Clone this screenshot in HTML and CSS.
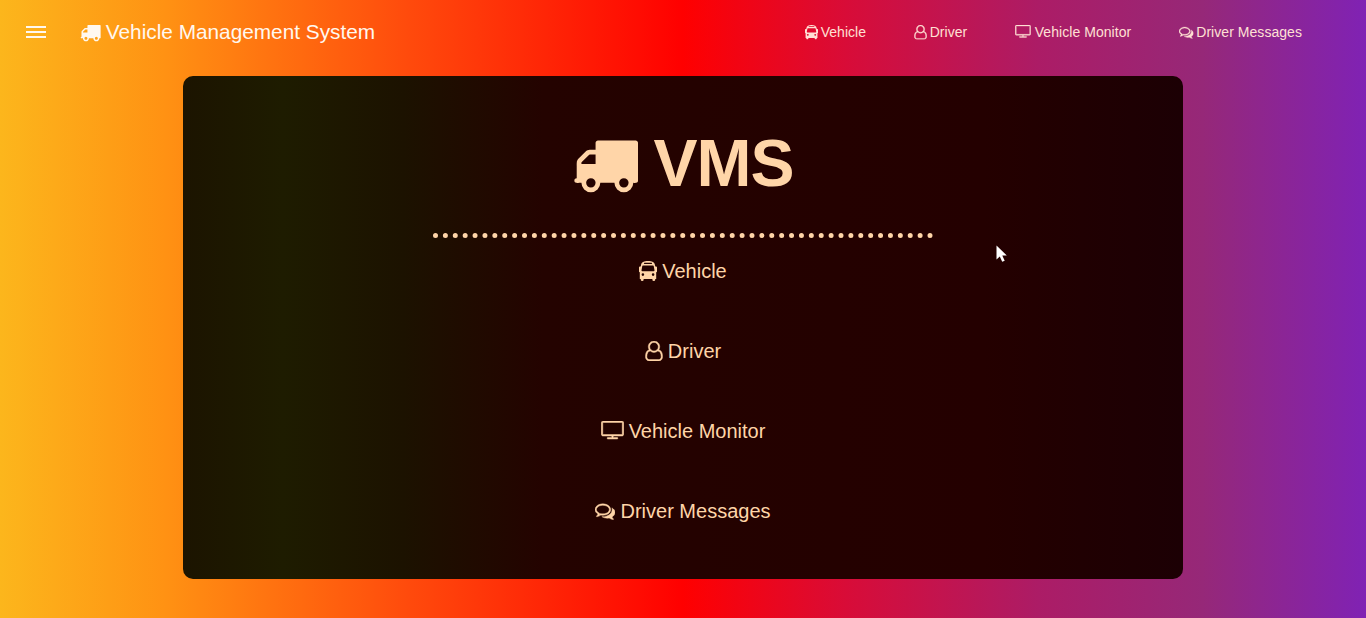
FILE: index.html
```html
<!DOCTYPE html>
<html lang="en">
<head>
<meta charset="utf-8">
<title>Vehicle Management System</title>
<link rel="stylesheet" href="styles.css">
</head>
<body>
<svg class="sprite" aria-hidden="true">
  <symbol id="truck" viewBox="0 0 1792 1792"><path d="M640 1408q0-52-38-90t-90-38-90 38-38 90 38 90 90 38 90-38 38-90zm-384-512h384v-256h-158q-13 0-22 9l-195 195q-9 9-9 22v30zm1280 512q0-52-38-90t-90-38-90 38-38 90 38 90 90 38 90-38 38-90zm256-1088v1024q0 15-4 26.500t-13.500 18.500-16.500 11.500-23.500 6-22.500 2-25.500 0-22.500-.5q0 106-75 181t-181 75-181-75-75-181h-384q0 106-75 181t-181 75-181-75-75-181h-64q-3 0-22.500.5t-25.500 0-22.500-2-23.500-6-16.500-11.500-13.500-18.500-4-26.500q0-26 19-45t45-19v-320q0-8-.5-35t0-38 2.500-34.500 6.500-37 14-30.500 22.500-30l198-198q19-19 50.500-32t58.500-13h160v-192q0-26 19-45t45-19h1024q26 0 45 19t19 45z"/></symbol>
  <symbol id="bus" viewBox="0 0 18 20"><path fill-rule="evenodd" d="M2 4.200C2.200 1.200 5 0 9 0s6.800 1.200 7 4.200l.3 1.300h.7q1 0 1 1v4q0 .8-.8.800V18H16.200v1q0 1-1.400 1t-1.400-1v-1H4.600v1q0 1-1.400 1t-1.400-1v-1H.8v-6.700Q0 11.300 0 10.500v-4q0-1 1-1h.7zM5.500 1.700q-.6 0-.6.6t.6.600h7q.6 0 .6-.6t-.6-.6zM3.900 4.400q-.5 0-.6.600l-.8 4.300q-.1.900.8.900h11.400q.9 0 .8-.9L14.700 5q-.1-.6-.6-.6zM3.900 12.300a1.300 1.300 0 1 0 0 2.600 1.300 1.300 0 0 0 0-2.600zm10.200 0a1.300 1.300 0 1 0 0 2.600 1.300 1.300 0 0 0 0-2.600z"/></symbol>
  <symbol id="user" viewBox="0 0 1536 1792"><path class="bold" d="M1201 784q47 14 89.500 38t89 73 79.500 115.500 55 172 22 236.500q0 154-100 263.500t-241 109.500h-854q-141 0-241-109.500t-100-263.500q0-131 22-236.500t55-172 79.500-115.500 89-73 89.500-38q-79-125-79-272 0-104 40.500-198.500t109.500-163.500 163.500-109.500 198.500-40.500 198.500 40.500 163.500 109.500 109.500 163.500 40.500 198.500q0 147-79 272zm-433-656q-159 0-271.500 112.500t-112.500 271.500 112.500 271.500 271.500 112.500 271.500-112.500 112.500-271.500-112.500-271.500-271.500-112.500zm427 1536q88 0 150.500-71.500t62.500-173.500q0-239-78.500-377t-225.500-145q-145 127-336 127t-336-127q-147 7-225.500 145t-78.500 377q0 102 62.500 173.500t150.500 71.500h854z"/></symbol>
  <symbol id="monitor" viewBox="0 0 1920 1792"><path class="bold" d="M1792 1120v-960q0-13-9.500-22.500t-22.500-9.500h-1600q-13 0-22.500 9.500t-9.500 22.500v960q0 13 9.500 22.500t22.500 9.500h1600q13 0 22.500-9.500t9.500-22.500zm128-960v960q0 66-47 113t-113 47h-736v128h352q14 0 23 9t9 23v64q0 14-9 23t-23 9h-832q-14 0-23-9t-9-23v-64q0-14 9-23t23-9h352v-128h-736q-66 0-113-47t-47-113v-960q0-66 47-113t113-47h1600q66 0 113 47t47 113z"/></symbol>
  <symbol id="chat" viewBox="0 0 1792 1792"><path class="bold" d="M704 384q-153 0-286 52t-211.500 141-78.500 191q0 82 53 158t149 132l97 56-35 84q34-20 62-39l44-31 53 10q78 14 153 14 153 0 286-52t211.500-141 78.500-191-78.500-191-211.500-141-286-52zm0-128q191 0 353.500 68.500t256.500 186.500 94 257-94 257-256.500 186.500-353.500 68.500q-86 0-176-16-124 88-278 128-36 9-86 16h-3q-11 0-20.500-8t-11.500-21q-1-3-1-6.500t.5-6.500 2-6l2.500-5 3.500-5.500 4-5 4.500-5 4-4.500q5-6 23-25t26-29.500 22.500-29 25-38.500 20.500-44q-124-72-195-177t-71-224q0-139 94-257t256.500-186.500 353.500-68.500zm822 1169q10 24 20.500 44t25 38.500 22.500 29 26 29.500 23 25q1 1 4 4.500t4.500 5 4 5 3.500 5.500l2.500 5 2 6 .5 6.500-1 6.500q-3 14-13 22t-22 7q-50-7-86-16-154-40-278-128-90 16-176 16-271 0-472-132 58 4 88 4 161 0 309-45t264-129q125-92 192-212t67-254q0-77-23-152 129 71 204 178t75 230q0 120-71 224.500t-195 176.500z"/></symbol>
</svg>

<header class="navbar">
  <button class="menu" aria-label="Menu"><span></span><span></span><span></span></button>
  <div class="brand"><svg class="icon"><use href="#truck"/></svg><span>Vehicle Management System</span></div>
  <nav class="links">
    <a class="link"><svg class="icon narrow"><use href="#bus"/></svg><span>Vehicle</span></a>
    <a class="link"><svg class="icon narrow"><use href="#user"/></svg><span>Driver</span></a>
    <a class="link"><svg class="icon wide"><use href="#monitor"/></svg><span>Vehicle Monitor</span></a>
    <a class="link"><svg class="icon"><use href="#chat"/></svg><span>Driver Messages</span></a>
  </nav>
</header>

<main class="panel">
  <h1 class="title"><svg class="icon"><use href="#truck"/></svg><span>VMS</span></h1>
  <div class="divider"></div>
  <a class="item"><svg class="icon narrow"><use href="#bus"/></svg><span>Vehicle</span></a>
  <a class="item"><svg class="icon narrow"><use href="#user"/></svg><span>Driver</span></a>
  <a class="item"><svg class="icon wide"><use href="#monitor"/></svg><span>Vehicle Monitor</span></a>
  <a class="item"><svg class="icon"><use href="#chat"/></svg><span>Driver Messages</span></a>
</main>
<svg class="cursor" viewBox="0 0 12 18"><path d="M.5.500v14l3.300-3 2.400 5.300 2.500-1.100-2.400-5.100h4.500z"/></svg>
</body>
</html>
```

FILE: styles.css
```css
* { box-sizing: border-box; }

body {
  margin: 0;
  height: 618px;
  overflow: hidden;
  font-family: "Liberation Sans", Arial, sans-serif;
  color: #ffd5a8;
  background: linear-gradient(to right, #fcb61c 0%, #ff9213 12%, #ff4a0c 30%, #ff0000 50%, #d80c38 62%, #ac1c66 76%, #962878 88%, #8022b4 100%);
}

.sprite { display: none; }

.icon {
  width: 1em;
  height: 1em;
  flex: none;
  fill: currentColor;
  overflow: visible;
}
.icon.narrow { width: 0.9em; }
.icon.wide { width: 1.1em; }
.bold { stroke: currentColor; stroke-width: 40px; }

.navbar {
  display: flex;
  align-items: center;
  height: 64px;
  padding: 0 64px 0 26px;
  color: #fff8ef;
}

.menu {
  display: flex;
  flex-direction: column;
  gap: 3px;
  width: 20px;
  padding: 0;
  border: 0;
  background: none;
}
.menu span { height: 2px; background: #fff8ef; }

.brand {
  display: flex;
  align-items: center;
  gap: 5.500px;
  margin-left: 33.500px;
  font-size: 20.800px;
}

.links {
  display: flex;
  gap: 47.500px;
  margin-left: auto;
  font-size: 14px;
  color: #ffe0d4;
}
.link { display: flex; align-items: center; gap: 3px; }
.link .icon { font-size: 14.500px; }
.link span { letter-spacing: 0.05px; }
.link .wide { margin-right: 1px; }

.panel {
  display: flex;
  flex-direction: column;
  align-items: center;
  width: 1000px;
  height: 503px;
  margin: 12px auto 0;
  padding-top: 50px;
  border-radius: 10px;
  background: linear-gradient(to right, #1c1400 0%, #1e1c00 10%, #1c1200 22%, #240300 36%, #240000 80%, #1c0004 100%);
}

.title {
  display: flex;
  align-items: center;
  gap: 15px;
  height: 75px;
  margin: 0 0 1px;
  font-size: 66px;
  line-height: 75px;
}
.title span { letter-spacing: -1px; }

.divider {
  width: 500px;
  margin: 31px 0 13px;
  border-top: 5px dotted #ffd5a8;
}

.item {
  display: flex;
  align-items: center;
  gap: 5px;
  height: 40px;
  margin-bottom: 40px;
  font-size: 20px;
}
.item .wide { width: 23px; height: 21px; }

.cursor {
  position: absolute;
  left: 996px;
  top: 245px;
  width: 12px;
  height: 18px;
  fill: #fff;
}
```
